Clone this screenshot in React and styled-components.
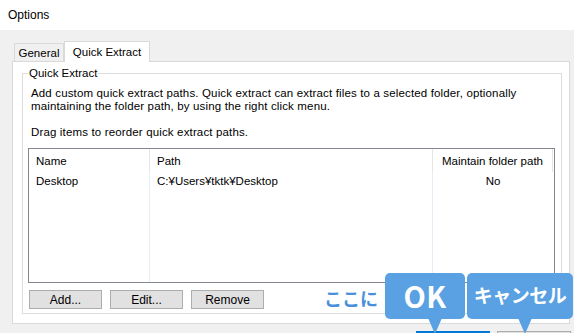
import styled, { createGlobalStyle } from "styled-components";

const Global = createGlobalStyle`
  html, body {
    margin: 0;
    padding: 0;
    background: #f0f0f0;
    overflow: hidden;
  }
  * { box-sizing: border-box; }
`

const Page = styled.div`
  position: relative;
  width: 574px;
  height: 333px;
  overflow: hidden;
  font-family: "Liberation Sans", Arial, sans-serif;
  font-size: 11.5px;
  color: #000;
`
const TitleBar = styled.div`
  height: 30px;
  line-height: 30px;
  background: #fff;
  padding-left: 8px;
  font-size: 12px;
`
const Body = styled.div`
  padding: 11px 0 0 12px;
`
const TabStrip = styled.div`
  display: flex;
  align-items: flex-start;
  height: 21px;
  margin-bottom: -1px;
`
const Tab = styled.div`
  position: relative;
  z-index: ${p => (p.$active ? 1 : 0)};
  height: ${p => (p.$active ? "21px" : "18px")};
  margin-top: ${p => (p.$active ? "0" : "2px")};
  margin-left: ${p => (p.$active ? "0" : "2px")};
  width: ${p => p.$w}px;
  border: 1px solid #d9d9d9;
  border-bottom: none;
  background: ${p => (p.$active ? "#fff" : "#f0f0f0")};
  display: flex;
  justify-content: center;
  align-items: center;
  padding-bottom: ${p => (p.$active ? "1px" : "0")};
`
const Panel = styled.div`
  width: 558px;
  height: 263px;
  border: 1px solid #d9d9d9;
  background: #fff;
  padding: 11px 0 0 9px;
`
const Group = styled.div`
  position: relative;
  width: 540px;
  height: 241px;
  border: 1px solid #dcdcdc;
  padding: 13px 0 0 5px;
`
const Legend = styled.span`
  position: absolute;
  top: -8px;
  left: 5px;
  padding: 0 1px;
  line-height: 14px;
  background: #fff;
`
const Description = styled.div`
  padding-left: 3px;
  line-height: 13px;
  letter-spacing: 0.15px;
`
const List = styled.div`
  margin-top: 9px;
  width: 527px;
  height: 135px;
  border: 1px solid #828790;
  display: grid;
  grid-template-columns: 121px 283px 120px 1fr;
  grid-template-rows: 23px 1fr;
`
const HeadCell = styled.div`
  border-right: ${p => (p.$last ? "none" : "1px solid #e5e5e5")};
  display: flex;
  align-items: center;
  justify-content: ${p => (p.$center ? "center" : "flex-start")};
  padding-left: ${p => (p.$center ? "0" : "7px")};
`
const Column = styled.div`
  border-right: ${p => (p.$line ? "1px solid #e6edf6" : "none")};
  text-align: ${p => (p.$center ? "center" : "left")};
  padding-left: ${p => (p.$center ? "0" : "7px")};
`
const Cell = styled.div`
  height: 19px;
  line-height: 19px;
`
const ButtonRow = styled.div`
  display: flex;
  gap: 8px;
  margin: 7px 0 0 1px;
`
const Button = styled.div`
  width: 73px;
  height: 19px;
  background: #e1e1e1;
  border: 1px solid #adadad;
  display: flex;
  align-items: center;
  justify-content: center;
  font-size: 12px;
`
const Footer = styled.div`
  display: flex;
  justify-content: flex-end;
  gap: 7px;
  margin-top: 7px;
  padding-right: 3px;
`
const DialogButton = styled.div`
  width: 74px;
  height: 23px;
  background: #e1e1e1;
  border: ${p => (p.$default ? "2px solid #0078d7" : "1px solid #adadad")};
`
const Hint = styled.span`
  position: absolute;
  left: 324px;
  top: 285px;
  font-family: "Noto Sans CJK JP", sans-serif;
  font-weight: 700;
  font-size: 18px;
  color: #4a90d9;
`
const Callout = styled.div`
  position: absolute;
  left: ${p => p.$x}px;
  top: 273px;
  width: ${p => p.$w}px;
  height: 46px;
  background: #59a1e2;
  border-radius: 5px;
  color: #fff;
  font-family: "Noto Sans CJK JP", sans-serif;
  font-weight: 700;
  font-size: ${p => p.$size}px;
  letter-spacing: ${p => p.$ls}px;
  display: flex;
  align-items: center;
  justify-content: center;
  padding-bottom: 3px;
  &::after {
    content: "";
    position: absolute;
    left: ${p => p.$tip}px;
    bottom: -15px;
    border-left: 7px solid transparent;
    border-right: 7px solid transparent;
    border-top: 16px solid #59a1e2;
  }
`

const rows = [{ name: "Desktop", path: "C:¥Users¥tktk¥Desktop", keep: "No" }]

export default function App() {
  return (
    <Page>
      <Global />
      <TitleBar>Options</TitleBar>
      <Body>
        <TabStrip>
          <Tab $w={50}>General</Tab>
          <Tab $active $w={86}>Quick Extract</Tab>
        </TabStrip>
        <Panel>
          <Group>
            <Legend>Quick Extract</Legend>
            <Description>
              Add custom quick extract paths. Quick extract can extract files to a selected folder, optionally
              <br />
              maintaining the folder path, by using the right click menu.
              <br />
              <br />
              Drag items to reorder quick extract paths.
            </Description>
            <List>
              <HeadCell>Name</HeadCell>
              <HeadCell>Path</HeadCell>
              <HeadCell $center>Maintain folder path</HeadCell>
              <HeadCell $last />
              <Column $line>{rows.map(r => <Cell key={r.name}>{r.name}</Cell>)}</Column>
              <Column $line>{rows.map(r => <Cell key={r.name}>{r.path}</Cell>)}</Column>
              <Column $center>{rows.map(r => <Cell key={r.name}>{r.keep}</Cell>)}</Column>
              <Column />
            </List>
            <ButtonRow>
              <Button>Add...</Button>
              <Button>Edit...</Button>
              <Button>Remove</Button>
            </ButtonRow>
          </Group>
        </Panel>
        <Footer>
          <DialogButton $default />
          <DialogButton />
        </Footer>
      </Body>
      <Hint>ここに</Hint>
      <Callout $x={385} $w={80} $size={29} $ls={0.5} $tip={43}>OK</Callout>
      <Callout $x={467} $w={106} $size={19} $ls={-0.5} $tip={51}>キャンセル</Callout>
    </Page>
  )
}
